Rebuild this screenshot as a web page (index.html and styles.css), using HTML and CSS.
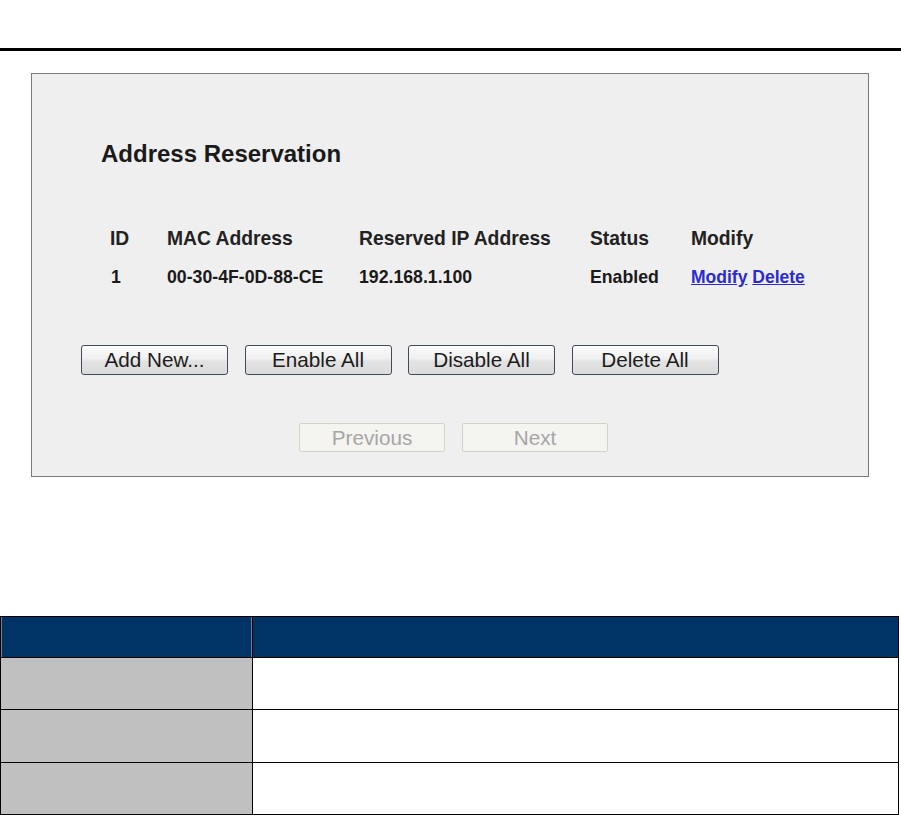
FILE: index.html
```html
<!DOCTYPE html>
<html lang="en">
<head>
<meta charset="utf-8">
<title>Address Reservation</title>
<link rel="stylesheet" href="styles.css">
</head>
<body>
<div class="rule"></div>
<div class="panel">
  <h1 class="title">Address Reservation</h1>
  <div class="list">
    <div class="th">ID</div>
    <div class="th">MAC Address</div>
    <div class="th">Reserved IP Address</div>
    <div class="th">Status</div>
    <div class="th">Modify</div>
    <div class="td td-id">1</div>
    <div class="td">00-30-4F-0D-88-CE</div>
    <div class="td">192.168.1.100</div>
    <div class="td">Enabled</div>
    <div class="td td-links"><a href="#" class="lnk">Modify</a> <a href="#" class="lnk">Delete</a></div>
  </div>
  <div class="actions">
    <button class="btn">Add New...</button>
    <button class="btn">Enable All</button>
    <button class="btn">Disable All</button>
    <button class="btn">Delete All</button>
  </div>
  <div class="nav">
    <button class="btn btn-off" disabled>Previous</button>
    <button class="btn btn-off" disabled>Next</button>
  </div>
</div>
<table class="desc">
  <tr class="desc-head"><th class="c1"></th><th class="c2"></th></tr>
  <tr class="r52"><td class="c1"></td><td class="c2"></td></tr>
  <tr class="r53"><td class="c1"></td><td class="c2"></td></tr>
  <tr class="r52"><td class="c1"></td><td class="c2"></td></tr>
</table>
</body>
</html>
```
FILE: styles.css
```css
html, body {
  margin: 0;
  padding: 0;
  background: #ffffff;
}
body {
  font-family: "Liberation Sans", Arial, sans-serif;
  color: #1e1e1e;
}
.rule {
  margin-top: 48px;
  height: 3px;
  background: #000000;
}
.panel {
  margin: 22px 0 0 31px;
  width: 836px;
  border: 1px solid #7a7a7a;
  background: #efefef;
  padding: 66px 0 24px 0;
}
.title {
  margin: 0 0 0 69px;
  font-size: 24px;
  line-height: 28px;
  font-weight: bold;
  color: #1a1a1a;
}
.list {
  margin: 52px 0 0 78px;
  display: grid;
  grid-template-columns: 57px 192px 231px 101px auto;
  grid-auto-rows: 38px;
}
.th {
  font-size: 19.3px;
  line-height: 38px;
  font-weight: bold;
  color: #222222;
  white-space: nowrap;
}
.td {
  font-size: 17.7px;
  line-height: 38px;
  font-weight: bold;
  color: #1a1a1a;
  white-space: nowrap;
}
.td-id {
  padding-left: 1px;
}
.td-links {
  font-size: 17.5px;
}
.lnk {
  color: #2a2ad6;
  text-decoration: underline;
}
.actions {
  margin-top: 49px;
  padding-left: 49px;
  display: flex;
  gap: 16.5px;
}
.nav {
  margin-top: 48px;
  padding-left: 267px;
  display: flex;
  gap: 17px;
}
.btn {
  box-sizing: border-box;
  width: 147px;
  height: 30px;
  margin: 0;
  padding: 0;
  border: 1px solid #3f4b5a;
  border-radius: 3px;
  background: linear-gradient(#fbfbfb 0%, #f0f0f0 45%, #e2e2e2 55%, #dcdcdc 100%);
  font-family: "Liberation Sans", Arial, sans-serif;
  font-size: 20.7px;
  line-height: 28px;
  color: #1c1c1c;
  text-align: center;
}
.btn-off {
  width: 146px;
  height: 29px;
  border: 1px solid #d6d3c6;
  border-radius: 2px;
  background: #f4f4f0;
  color: #a6a6a6;
  line-height: 27px;
}
.desc {
  margin-top: 139px;
  width: 899px;
  border-collapse: collapse;
  table-layout: fixed;
}
.desc th, .desc td {
  border: 1px solid #000000;
  padding: 0;
}
.desc .c1 {
  width: 251px;
}
.desc-head {
  height: 41px;
}
.desc-head th {
  background: #003366;
}
.desc-head th.c1 {
  box-shadow: inset 1px 0 0 #6a7f99, inset -1px 0 0 #6a7f99;
}
.desc td.c1 {
  background: #c0c0c0;
}
.desc td.c2 {
  background: #ffffff;
}
.r52 {
  height: 52px;
}
.r53 {
  height: 53px;
}
```
